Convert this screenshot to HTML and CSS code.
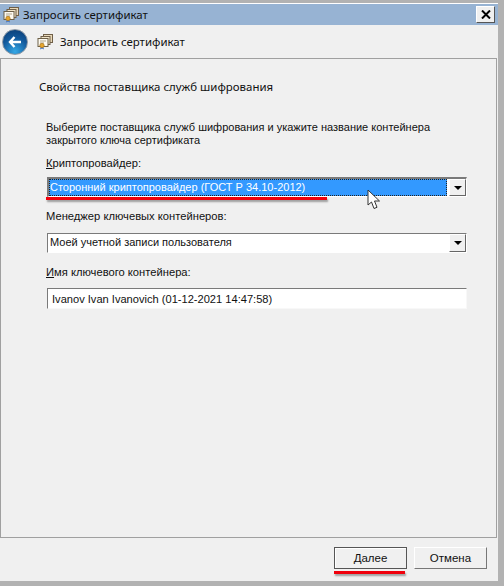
FILE: index.html
```html
<!DOCTYPE html>
<html lang="ru">

<head>
  <title>Запросить сертификат</title>
  <meta charset="utf-8">
  <link rel="stylesheet" href="styles.css">
</head>

<body>
  <svg class="icon-defs" width="0" height="0">
    <symbol id="cert" viewBox="0 0 16 16">
      <rect x="6.500" y="0.500" width="9" height="8" fill="#e8d8b8" stroke="#6f5f48"/>
      <rect x="4" y="2.500" width="9" height="8" fill="#f0e4c8" stroke="#6f5f48"/>
      <rect x="1" y="4.500" width="10" height="8" fill="#fdfaf0" stroke="#6d6048"/>
      <path d="M3 7h6M3 9h4" stroke="#b0a58c"/>
      <path d="M4 12l-1 3.500 2-1 2 1-1-3.500z" fill="#3a6fc4"/>
      <circle cx="5" cy="11.500" r="2.200" fill="#e6a52c" stroke="#a8701a" stroke-width=".6"/>
    </symbol>
  </svg>

  <div class="window">
    <div class="titlebar">
      <svg class="icon"><use href="#cert"/></svg>
      <span class="title">Запросить сертификат</span>
      <span class="close">
        <svg width="10" height="9" viewBox="0 0 10 9"><path d="M1 0.500l8 8M9 0.500l-8 8" stroke="#000" stroke-width="2"/></svg>
      </span>
    </div>

    <div class="navbar">
      <span class="back">
        <svg width="14" height="12" viewBox="0 0 14 12"><path d="M6.500 1L2 6l4.500 5M2.500 6H13" fill="none" stroke="#fff" stroke-width="2.400"/></svg>
      </span>
      <svg class="icon nav-icon"><use href="#cert"/></svg>
      <span>Запросить сертификат</span>
    </div>

    <div class="panel">
      <h1 class="heading">Свойства поставщика служб шифрования</h1>

      <div class="form">
        <p class="intro">Выберите поставщика служб шифрования и укажите название контейнера<br>закрытого ключа сертификата</p>

        <label class="field-label first-label"><u>К</u>риптопровайдер:</label>
        <div class="combo combo-active">
          <div class="combo-text"><span>Сторонний криптопровайдер (ГОСТ Р 34.10-2012)</span></div>
          <span class="combo-btn"><i class="arrow"></i></span>
        </div>

        <label class="field-label">Менеджер ключевых контейнеров:</label>
        <div class="combo">
          <div class="combo-text"><span>Моей учетной записи пользователя</span></div>
          <span class="combo-btn"><i class="arrow"></i></span>
        </div>

        <label class="field-label"><u>И</u>мя ключевого контейнера:</label>
        <div class="textbox">Ivanov Ivan Ivanovich (01-12-2021 14:47:58)</div>
      </div>
    </div>

    <div class="footer">
      <button class="btn btn-default"><u>Д</u>алее</button>
      <button class="btn">Отмена</button>
    </div>
  </div>

  <!-- red marks and the pointer drawn over the screenshot -->
  <div class="mark mark-combo"></div>
  <div class="mark mark-btn"></div>
  <svg class="pointer" width="14" height="21" viewBox="0 0 14 21">
    <path d="M1 1v15l3.500-3 2.500 6.500 3-1.200-2.500-6.300h5z" fill="#fff" stroke="#333"/>
  </svg>
</body>

</html>
```

FILE: styles.css
```css
* {
  box-sizing: border-box;
}

body {
  margin: 0;
  width: 504px;
  height: 586px;
  padding: 3px 6px 5px 0;
  overflow: hidden;
  background-color: #b2b2b2;
  font-family: "Noto Sans", Tahoma, sans-serif;
  font-size: 11.450px;
  color: #111;
}

.icon-defs {
  position: absolute;
}

.window {
  display: flex;
  flex-direction: column;
  height: 100%;
  background-color: #f0f0f0;
  border-top: 1px solid #fff;
}

/* Title bar */
.titlebar {
  display: flex;
  align-items: center;
  height: 21px;
  padding: 0 3px;
  background-color: #97b3d3;
}

.icon {
  width: 16px;
  height: 16px;
  flex: none;
}

.title {
  margin-left: 4px;
}

.close {
  display: flex;
  align-items: center;
  justify-content: center;
  width: 19px;
  height: 17px;
  margin-left: auto;
  background-color: #f0f0f0;
  border: 1px solid;
  border-color: #fff #555 #555 #fff;
}

/* Navigation row */
.navbar {
  display: flex;
  align-items: center;
  height: 33px;
  padding-left: 2px;
}

.back {
  display: flex;
  align-items: center;
  justify-content: center;
  width: 26px;
  height: 26px;
  border-radius: 50%;
  background: radial-gradient(circle at 50% 90%, #35a8e6, #12599c 55%, #0b3a70);
  border: 1px solid #8a97a5;
}

.nav-icon {
  margin-left: 9px;
  margin-right: 7px;
}

/* Main panel */
.panel {
  flex: 1;
  margin-right: 1px;
  padding: 19px 0 0 38px;
  border: 1px solid #a0a0a0;
}

.heading {
  margin: 0;
  font-size: 11.450px;
  font-weight: normal;
  line-height: 17px;
}

.form {
  width: 421px;
  margin: 26px 0 0 7px;
  font-family: "Liberation Sans", Tahoma, sans-serif;
  font-size: 11px;
}

.intro {
  margin: 0;
  line-height: 13px;
  white-space: nowrap;
}

.field-label {
  display: block;
  margin-top: 11px;
  font-size: 11.200px;
  line-height: 16px;
}

.first-label {
  margin-top: 8px;
}

.combo {
  display: flex;
  height: 20px;
  margin: 9px 0 0 1px;
  background-color: #fff;
  border: 1px solid;
  border-color: #7a7a7a #fff #fff #7a7a7a;
}

.combo-active {
  margin-top: 6px;
  border-width: 2px 1px 1px 2px;
}

.combo-text {
  flex: 1;
  margin-right: 2px;
  padding: 1px 0 0 2px;
  line-height: 15px;
}

.combo-active .combo-text {
  padding-left: 1px;
  background-color: #3399ff;
  color: #fff;
  outline: 1px dotted #222;
  outline-offset: -1px;
}

.combo-btn {
  display: flex;
  align-items: center;
  justify-content: center;
  width: 17px;
  background-color: #f0f0f0;
  border: 1px solid;
  border-color: #fff #666 #666 #fff;
}

.arrow {
  width: 0;
  height: 0;
  border: 4px solid transparent;
  border-top-color: #000;
  border-bottom-width: 0;
}

.textbox {
  height: 21px;
  margin: 8px 0 0 1px;
  padding: 2px 0 0 4px;
  font-size: 11.100px;
  line-height: 16px;
  background-color: #fff;
  border: 1px solid;
  border-color: #7a7a7a #f8f8f8 #f8f8f8 #7a7a7a;
}

/* Footer buttons */
.footer {
  display: flex;
  justify-content: flex-end;
  gap: 7px;
  height: 43px;
  padding: 9px 11px 0 0;
}

.btn {
  width: 73px;
  height: 22px;
  padding: 0;
  font-family: "Liberation Sans", Tahoma, sans-serif;
  font-size: 11.500px;
  color: #111;
  background-color: #f0f0f0;
  border: 1px solid;
  border-color: #fff #777 #777 #fff;
}

.btn-default {
  border-color: #555;
  box-shadow: inset 1px 1px 0 #fff;
}

/* Overlays */
.mark {
  position: absolute;
  height: 3px;
  background-color: #f0000c;
  box-shadow: 1px 2px 2px rgba(0, 0, 0, .35);
}

.mark-combo {
  left: 46px;
  top: 197px;
  width: 281px;
}

.mark-btn {
  left: 334px;
  top: 571px;
  width: 71px;
}

.pointer {
  position: absolute;
  left: 367px;
  top: 189px;
}
```
